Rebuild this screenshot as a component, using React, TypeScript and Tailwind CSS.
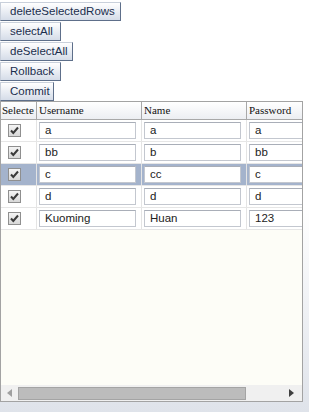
import React from "react";

const rows = [
  ["a", "a", "a"],
  ["bb", "b", "bb"],
  ["c", "cc", "c"],
  ["d", "d", "d"],
  ["Kuoming", "Huan", "123"],
];

const buttons: [string, string][] = [
  ["deleteSelectedRows", "w-[121px]"],
  ["selectAll", "w-[61px]"],
  ["deSelectAll", "w-[73px]"],
  ["Rollback", "w-[61px]"],
  ["Commit", "w-[54px]"],
];

function Check() {
  return (
    <div className="w-[13px] h-[13px] border border-[#8f8f8f] bg-gradient-to-b from-[#f4f4f4] to-[#d8d8d8] flex items-center justify-center">
      <svg width="11" height="11" viewBox="0 0 11 11">
        <path d="M2 5.5 L4.3 8 L9 2.5" stroke="#3a3a3a" strokeWidth="2" fill="none" />
      </svg>
    </div>
  );
}

function Cell({ v, w }: { v: string; w: string }) {
  return (
    <div className={`${w} shrink-0 h-full px-[2px] py-[2px] border-r border-[#e4e4e4]`}>
      <div className="h-full w-[97px] bg-white border border-[#c3c7cf] border-t-[#a9aeb8] pl-[5px] flex items-center text-[11.5px] text-[#222] font-['Liberation_Sans',Arial,sans-serif]">
        {v}
      </div>
    </div>
  );
}

export default function App() {
  return (
    <div className="w-[309px] h-[412px] overflow-hidden bg-gradient-to-b from-white via-white to-[#dfe3ea]">
      <div className="pt-[2px] flex flex-col gap-[1px]">
        {buttons.map(([t, w]) => (
          <div
            key={t}
            className={`${w} h-[19px] flex items-center pl-[9px] text-[11.5px] text-[#1b2e4d] font-['Liberation_Sans',Arial,sans-serif] bg-gradient-to-b from-white to-[#d5dce8] border border-[#c9d0db] border-r-[#5e6f8a] border-b-[#5e6f8a]`}
          >
            {t}
          </div>
        ))}
      </div>
      <div className="w-[303px] h-[301px] border border-[#a3a3a3] flex flex-col bg-[#fdfdf7]">
        <div className="flex-1 overflow-hidden">
          <div className="w-[356px]">
            <div className="flex h-[18px] border-b border-[#a8a8a8] bg-gradient-to-b from-white to-[#eceef2] text-[11px] text-[#111] font-['Liberation_Serif','Times_New_Roman',serif]">
              <div className="w-[36px] shrink-0 border-r border-[#a8a8a8] pl-[1px] overflow-hidden whitespace-nowrap leading-[17px]">Selecte</div>
              <div className="w-[105px] shrink-0 border-r border-[#a8a8a8] pl-[2px] leading-[17px]">Username</div>
              <div className="w-[105px] shrink-0 border-r border-[#a8a8a8] pl-[2px] leading-[17px]">Name</div>
              <div className="w-[105px] shrink-0 border-r border-[#a8a8a8] pl-[2px] leading-[17px]">Password</div>
            </div>
            {rows.map((r, i) => (
              <div
                key={i}
                className={`flex h-[22px] border-b border-[#e6e6e6] ${i === 2 ? "bg-[#a4b3cc]" : "bg-white"}`}
              >
                <div className="w-[36px] shrink-0 h-full border-r border-[#e4e4e4] flex items-center pl-[7px]">
                  <Check />
                </div>
                <Cell v={r[0]} w="w-[105px]" />
                <Cell v={r[1]} w="w-[105px]" />
                <Cell v={r[2]} w="w-[105px]" />
              </div>
            ))}
          </div>
        </div>
        <div className="h-[16px] bg-[#f0f0f0] flex items-center">
          <div className="w-[17px] flex justify-center">
            <svg width="5" height="8" viewBox="0 0 5 8"><path d="M5 0 L0 4 L5 8 Z" fill="#a0a0a0" /></svg>
          </div>
          <div className="w-[228px] h-[13px] bg-[#bcbcbc] border border-[#a4a4a4]" />
          <div className="flex-1" />
          <div className="w-[17px] flex justify-center mr-[2px]">
            <svg width="5" height="8" viewBox="0 0 5 8"><path d="M0 0 L5 4 L0 8 Z" fill="#404040" /></svg>
          </div>
        </div>
      </div>
    </div>
  );
}
